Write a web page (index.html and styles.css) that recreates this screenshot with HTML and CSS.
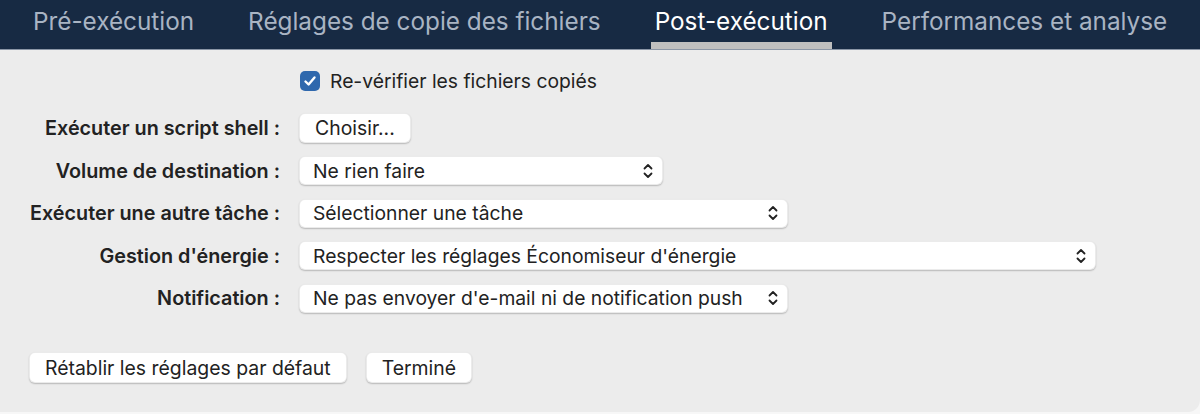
FILE: index.html
```html
<!DOCTYPE html>
<html lang="fr">
<head>
    <meta charset="UTF-8">
    <title>Post-exécution</title>
    <link rel="stylesheet" href="styles.css">
</head>
<body>
    <div class="window">
        <nav class="tabs">
            <span class="tab">Pré-exécution</span>
            <span class="tab">Réglages de copie des fichiers</span>
            <span class="tab active">Post-exécution</span>
            <span class="tab">Performances et analyse</span>
        </nav>

        <div class="content">
            <label class="check-row">
                <span class="checkbox">
                    <svg width="14" height="14" viewBox="0 0 14 14"><path d="M2.5 7.5 L5.6 10.5 L11.5 3.5" fill="none" stroke="#fff" stroke-width="2.4" stroke-linecap="round" stroke-linejoin="round"/></svg>
                </span>
                Re-vérifier les fichiers copiés
            </label>

            <div class="form">
                <div class="label">Exécuter un script shell :</div>
                <div><button class="btn">Choisir...</button></div>

                <div class="label">Volume de destination :</div>
                <div><div class="select w-small">Ne rien faire <svg class="updown" width="10" height="16" viewBox="0 0 10 16"><path d="M1.5 5.5 L5 2 L8.5 5.5 M1.5 10.5 L5 14 L8.5 10.5" fill="none" stroke="#222" stroke-width="1.8" stroke-linecap="round" stroke-linejoin="round"/></svg></div></div>

                <div class="label">Exécuter une autre tâche :</div>
                <div><div class="select w-mid">Sélectionner une tâche <svg class="updown" width="10" height="16" viewBox="0 0 10 16"><path d="M1.5 5.5 L5 2 L8.5 5.5 M1.5 10.5 L5 14 L8.5 10.5" fill="none" stroke="#222" stroke-width="1.8" stroke-linecap="round" stroke-linejoin="round"/></svg></div></div>

                <div class="label">Gestion d'énergie :</div>
                <div><div class="select w-wide">Respecter les réglages Économiseur d'énergie <svg class="updown" width="10" height="16" viewBox="0 0 10 16"><path d="M1.5 5.5 L5 2 L8.5 5.5 M1.5 10.5 L5 14 L8.5 10.5" fill="none" stroke="#222" stroke-width="1.8" stroke-linecap="round" stroke-linejoin="round"/></svg></div></div>

                <div class="label">Notification :</div>
                <div><div class="select w-mid">Ne pas envoyer d'e-mail ni de notification push <svg class="updown" width="10" height="16" viewBox="0 0 10 16"><path d="M1.5 5.5 L5 2 L8.5 5.5 M1.5 10.5 L5 14 L8.5 10.5" fill="none" stroke="#222" stroke-width="1.8" stroke-linecap="round" stroke-linejoin="round"/></svg></div></div>
            </div>

            <div class="footer">
                <button class="btn btn-footer">Rétablir les réglages par défaut</button>
                <button class="btn btn-footer">Terminé</button>
            </div>
        </div>
    </div>
</body>
</html>
```

FILE: styles.css
```css
body {
    margin: 0;
    background: #f7f7f7;
    font-family: 'Inter', 'Noto Sans', sans-serif;
    color: #222;
}
.window {
    height: 412px;
    background: #ececec;
    border-bottom-right-radius: 12px;
    overflow: hidden;
}
.tabs {
    display: flex;
    gap: 46px;
    height: 50px;
    padding-left: 29px;
    background: #172a43;
    border-bottom: 1px solid #8b96a6;
    box-sizing: border-box;
}
.tab {
    padding: 0 4px;
    font-size: 24.3px;
    line-height: 43px;
    color: #a9b4c3;
    border-bottom: 7px solid transparent;
}
.tab.active {
    color: #fff;
    border-bottom-color: #bfbfbf;
}
.content {
    padding: 21px 0 0 0;
}
.check-row {
    display: flex;
    align-items: center;
    gap: 10px;
    margin-left: 300px;
    height: 20px;
    font-size: 19.3px;
}
.checkbox {
    width: 20px;
    height: 20px;
    border-radius: 5px;
    background: #2f68ad;
    display: flex;
    align-items: center;
    justify-content: center;
}
.form {
    display: grid;
    grid-template-columns: 280px 1fr;
    grid-auto-rows: 30px;
    column-gap: 19px;
    row-gap: 12.5px;
    margin-top: 22px;
    align-items: center;
}
.label {
    text-align: right;
    font-size: 19.8px;
    font-weight: 600;
    color: #222;
}
.btn {
    font-family: inherit;
    font-size: 19.4px;
    color: #222;
    background: #fff;
    border: 0.5px solid rgba(0, 0, 0, 0.08);
    border-radius: 6px;
    box-shadow: 0 1px 1.5px rgba(0, 0, 0, 0.22);
    height: 30px;
    padding: 0 15px;
}
.select {
    display: flex;
    align-items: center;
    justify-content: space-between;
    height: 29px;
    box-sizing: border-box;
    padding: 0 9px 0 13px;
    font-size: 19.3px;
    background: #fff;
    border-radius: 6px;
    border: 0.5px solid rgba(0, 0, 0, 0.08);
    box-shadow: 0 1px 1.5px rgba(0, 0, 0, 0.22);
}
.w-small { width: 364px; }
.w-mid { width: 489px; }
.w-wide { width: 797px; }
.footer {
    display: flex;
    gap: 19px;
    margin: 39px 0 0 29px;
}
.btn-footer {
    height: 31px;
}
```
